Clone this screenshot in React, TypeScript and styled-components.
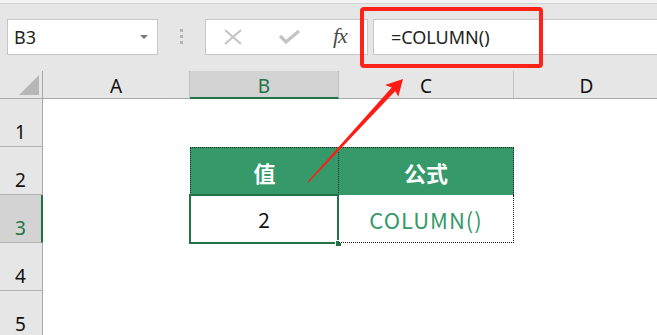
import React from "react";
import styled, { createGlobalStyle } from "styled-components";

const Global = createGlobalStyle`
  html, body { margin: 0; padding: 0; background: #ffffff; }
  body { font-family: "Noto Sans", "Liberation Sans", sans-serif; }
`;

const GREEN = "#35996a";
const SEL = "#217346";

const Page = styled.div`
  position: relative;
  width: 657px;
  height: 335px;
  overflow: hidden;
  background: #ffffff;
`;

const Toolbar = styled.div`
  box-sizing: border-box;
  height: 71px;
  background: #e6e6e6;
  border-top: 3px solid #f3f3f3;
  box-shadow: inset 0 1px 0 #d6d6d6;
  display: flex;
  align-items: flex-start;
  padding: 16px 0 0 7px;
`;

const Box = styled.div`
  box-sizing: border-box;
  height: 36px;
  background: #ffffff;
  border: 1px solid #c6c6c6;
  display: flex;
  align-items: center;
`;

const NameBox = styled(Box)`
  width: 151px;
  padding: 0 9px 0 6px;
  justify-content: space-between;
  font-size: 18px;
  color: #222;
`;

const Caret = styled.span`
  width: 0;
  height: 0;
  border-left: 4px solid transparent;
  border-right: 4px solid transparent;
  border-top: 4px solid #777;
`;

const Grip = styled.div`
  width: 3px;
  margin: 10px 22px 0 22px;
  display: flex;
  flex-direction: column;
  gap: 3px;
`;

const Dot = styled.span`
  width: 3px;
  height: 3px;
  background: #b3b3b3;
`;

const FxButtons = styled(Box)`
  width: 163px;
  padding-left: 18px;
`;

const IconSlot = styled.span<{ $w: number }>`
  width: ${(p) => p.$w}px;
  display: flex;
  align-items: center;
`;

const Fx = styled.span`
  font-family: "Liberation Serif", "DejaVu Serif", serif;
  font-style: italic;
  font-size: 22px;
  color: #4a4a4a;
  letter-spacing: -1px;
  margin: -3px 0 0 2px;
`;

const FormulaInput = styled(Box)`
  flex: 1;
  margin-left: 5px;
  border-right: none;
  padding-left: 17px;
  font-size: 18px;
  color: #222;
`;

const Sheet = styled.div`
  display: grid;
  grid-template-columns: 43px 147px 149px 175px 146px;
  grid-template-rows: 28px repeat(5, 48px);
`;

const Corner = styled.div`
  box-sizing: border-box;
  background: #e6e6e6;
  border-right: 1px solid #a8a8a8;
  border-bottom: 1px solid #a8a8a8;
  position: relative;
  &::after {
    content: "";
    position: absolute;
    right: 3px;
    bottom: 3px;
    width: 0;
    height: 0;
    border-left: 20px solid transparent;
    border-bottom: 20px solid #b7b7b7;
  }
`;

const ColHead = styled.div<{ $sel?: boolean }>`
  box-sizing: border-box;
  background: ${(p) => (p.$sel ? "#d3d3d3" : "#e6e6e6")};
  border-right: 1px solid #bfbfbf;
  border-bottom: ${(p) => (p.$sel ? `2px solid ${SEL}` : "1px solid #a8a8a8")};
  color: ${(p) => (p.$sel ? SEL : "#111")};
  font-size: 19px;
  display: flex;
  align-items: flex-end;
  justify-content: center;
  padding-bottom: ${(p) => (p.$sel ? "1px" : "2px")};
  line-height: 1;
`;

const RowHead = styled.div<{ $sel?: boolean }>`
  box-sizing: border-box;
  background: ${(p) => (p.$sel ? "#d3d3d3" : "#e6e6e6")};
  border-right: ${(p) => (p.$sel ? `2px solid ${SEL}` : "1px solid #a8a8a8")};
  border-bottom: 1px solid #b3b3b3;
  color: ${(p) => (p.$sel ? SEL : "#111")};
  font-size: 19px;
  line-height: 1;
  display: flex;
  align-items: flex-end;
  justify-content: center;
  padding: 0 ${(p) => (p.$sel ? "0" : "1px")} 4px 0;
`;

const Cell = styled.div`
  box-sizing: border-box;
  background: #ffffff;
`;

const TableCell = styled.div<{ $head?: boolean; $first?: boolean }>`
  box-sizing: border-box;
  position: relative;
  display: flex;
  align-items: center;
  justify-content: center;
  font-family: "Noto Sans CJK SC", "Noto Sans", sans-serif;
  font-size: 22px;
  letter-spacing: ${(p) => (p.$head ? "0" : "1px")};
  background: ${(p) => (p.$head ? GREEN : "#ffffff")};
  color: ${(p) => (p.$head ? "#ffffff" : GREEN)};
  font-weight: ${(p) => (p.$head ? 700 : 400)};
  border-right: 1px dotted #222;
  border-top: ${(p) => (p.$head ? "1px dotted #222" : "none")};
  border-bottom: ${(p) => (p.$head ? "none" : "1px dotted #222")};
  border-left: ${(p) => (p.$first ? "1px dotted #222" : "none")};
`;

const ActiveCell = styled.div`
  box-sizing: border-box;
  position: relative;
  margin: -1px 0 -1px -1px;
  border: 2px solid ${SEL};
  display: flex;
  align-items: center;
  justify-content: center;
  font-family: "Noto Sans CJK SC", "Noto Sans", sans-serif;
  font-size: 21px;
  color: #111;
  background: #ffffff;
`;

const FillHandle = styled.span`
  position: absolute;
  right: -5px;
  bottom: -5px;
  width: 5px;
  height: 5px;
  background: ${SEL};
  border: 1px solid #ffffff;
`;

const Callout = styled.div`
  position: absolute;
  left: 360px;
  top: 7px;
  width: 183px;
  height: 61px;
  box-sizing: border-box;
  border: 4px solid #fe2218;
  border-radius: 4px;
  pointer-events: none;
`;

const ArrowLayer = styled.svg`
  position: absolute;
  left: 0;
  top: 0;
  pointer-events: none;
`;

const cols = ["A", "B", "C", "D"];

export default function App() {
  return (
    <Page>
      <Global />
      <Toolbar>
        <NameBox>
          <span>B3</span>
          <Caret />
        </NameBox>
        <Grip>
          <Dot />
          <Dot />
          <Dot />
        </Grip>
        <FxButtons>
          <IconSlot $w={55}>
            <svg width="18" height="16" viewBox="0 0 18 16">
              <path d="M1 1 L17 15 M17 1 L1 15" stroke="#c3c3c3" strokeWidth="2" fill="none" />
            </svg>
          </IconSlot>
          <IconSlot $w={52}>
            <svg width="21" height="14" viewBox="0 0 21 14">
              <path d="M1 6 L7 12 L20 1" stroke="#c3c3c3" strokeWidth="3.2" fill="none" />
            </svg>
          </IconSlot>
          <Fx>fx</Fx>
        </FxButtons>
        <FormulaInput>=COLUMN()</FormulaInput>
      </Toolbar>
      <Sheet>
        <Corner />
        {cols.map((c) => (
          <ColHead key={c} $sel={c === "B"}>
            {c}
          </ColHead>
        ))}

        <RowHead>1</RowHead>
        <Cell />
        <Cell />
        <Cell />
        <Cell />

        <RowHead>2</RowHead>
        <Cell />
        <TableCell $head $first>
          值
        </TableCell>
        <TableCell $head>公式</TableCell>
        <Cell />

        <RowHead $sel>3</RowHead>
        <Cell />
        <ActiveCell>
          2
          <FillHandle />
        </ActiveCell>
        <TableCell>COLUMN()</TableCell>
        <Cell />

        <RowHead>4</RowHead>
        <Cell />
        <Cell />
        <Cell />
        <Cell />

        <RowHead>5</RowHead>
        <Cell />
        <Cell />
        <Cell />
        <Cell />
      </Sheet>
      <Callout />
      <ArrowLayer width="657" height="335" viewBox="0 0 657 335">
        <polygon
          points="307.6,181.7 391.7,87.6 385,85 403,79 398.3,96.7 395.3,91 308.6,182.4"
          fill="#fe1c14"
        />
      </ArrowLayer>
    </Page>
  );
}
